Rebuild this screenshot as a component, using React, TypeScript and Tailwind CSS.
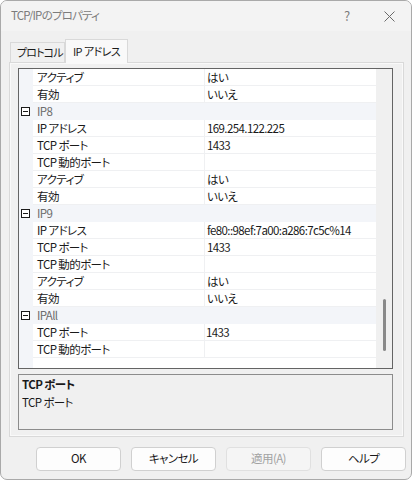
import React from 'react';

type Row = { cat?: string; n?: string; v?: string; edit?: boolean };

const rows: Row[] = [
  { n: 'アクティブ', v: 'はい' },
  { n: '有効', v: 'いいえ' },
  { cat: 'IP8' },
  { n: 'IP アドレス', v: '169.254.122.225' },
  { n: 'TCP ポート', v: '1433' },
  { n: 'TCP 動的ポート', v: '' },
  { n: 'アクティブ', v: 'はい' },
  { n: '有効', v: 'いいえ' },
  { cat: 'IP9' },
  { n: 'IP アドレス', v: 'fe80::98ef:7a00:a286:7c5c%14' },
  { n: 'TCP ポート', v: '1433' },
  { n: 'TCP 動的ポート', v: '' },
  { n: 'アクティブ', v: 'はい' },
  { n: '有効', v: 'いいえ' },
  { cat: 'IPAll' },
  { n: 'TCP ポート', v: '1433', edit: true },
  { n: 'TCP 動的ポート', v: '' },
];

const MinusBox = () => (
  <div className="w-[9px] h-[9px] border border-[#1a1a1a] flex items-center justify-center bg-white">
    <div className="w-[5px] h-px bg-[#1a1a1a]" />
  </div>
);

const GridRow = ({ row }: { row: Row }) => {
  if (row.cat) {
    return (
      <div className="flex h-[17px] bg-[#f3f5f9]">
        <div className="w-[14px] flex items-center pl-[2px]">
          <MinusBox />
        </div>
        <div className="flex-1 pl-[4px] leading-[17px] text-[#6d6d6d]">{row.cat}</div>
      </div>
    );
  }
  return (
    <div className="flex h-[17px]">
      <div className="w-[14px] bg-[#f3f5f9]" />
      <div className="w-[172px] border-b border-r border-[#eff0f2] bg-white pl-[4px] leading-[16px] whitespace-nowrap">
        {row.n}
      </div>
      <div
        className={
          row.edit
            ? 'w-[171px] bg-white pl-[1px] leading-[16px] whitespace-nowrap border-b border-[#eff0f2]'
            : 'w-[171px] bg-white pl-[2px] leading-[16px] whitespace-nowrap border-b border-[#eff0f2]'
        }
      >
        {row.v}
      </div>
    </div>
  );
};

export default function App() {
  return (
    <div className="w-[414px] h-[481px] bg-white font-['Noto_Sans_CJK_JP',sans-serif] [font-feature-settings:'palt'] text-[11.5px] tracking-[-0.6px] text-[#1a1a1a]">
      <div className="w-[412px] h-[480px] border border-[#a9a9a9] rounded-[7px] bg-[#f0f0f0] overflow-hidden flex flex-col">
        {/* Title bar */}
        <div className="h-[30px] bg-[#f3f3f3] flex items-center text-[#7c7c7c]">
          <div className="pl-[10px] flex-1 tracking-[-0.8px]">TCP/IPのプロパティ</div>
          <div className="w-[12px] text-[13px] mr-[28px]">?</div>
          <svg width="11" height="11" viewBox="0 0 11 11" className="mr-[16px]">
            <path d="M0.5 0.5 L10.5 10.5 M10.5 0.5 L0.5 10.5" stroke="#6a6a6a" strokeWidth="1" />
          </svg>
        </div>

        {/* Tabs */}
        <div className="flex items-end h-[23px] mt-[8px] pl-[9px] text-[11px] tracking-[-0.9px]">
          <div className="h-[20px] w-[55px] pl-[6px] border border-b-0 border-[#d9d9d9] bg-[#f0f0f0] leading-[19px] whitespace-nowrap">
            プロトコル
          </div>
          <div className="h-[24px] w-[63px] -mb-px relative z-10 pl-[7px] border border-b-0 border-[#d9d9d9] bg-[#f9f9f9] leading-[22px] whitespace-nowrap tracking-[-0.6px]">
            IP アドレス
          </div>
        </div>

        {/* Tab panel */}
        <div className="ml-[8px] w-[395px] h-[375px] border border-[#d9d9d9] bg-[#f9f9f9] p-px">
          <div className="w-full h-full bg-[#f0f0f0] pt-[4px] pl-[7px] flex flex-col">
            {/* Property grid */}
            <div className="w-[375px] h-[301px] border border-[#646464] bg-white flex">
              <div className="w-[357px] flex flex-col">
                {rows.map((r, i) => (
                  <GridRow key={i} row={r} />
                ))}
                <div className="flex flex-1">
                  <div className="w-[14px] bg-[#f3f5f9]" />
                  <div className="flex-1 bg-white" />
                </div>
              </div>
              <div className="w-[16px] bg-[#f0f0f0] flex justify-center pt-[230px]">
                <div className="w-[3px] h-[52px] bg-[#8a8a8a] rounded-full" />
              </div>
            </div>

            {/* Description */}
            <div className="w-[375px] h-[56px] mt-[5px] border border-[#8c8c8c] bg-[#f0f0f0] pl-[3px] pt-px">
              <div className="font-bold leading-[17px]">TCP ポート</div>
              <div className="leading-[17px] mt-px">TCP ポート</div>
            </div>
          </div>
        </div>

        {/* Buttons */}
        <div className="flex justify-end gap-[10px] pr-[5px] mt-[10px]">
          {['OK', 'キャンセル', '適用(A)', 'ヘルプ'].map((b) => (
            <div
              key={b}
              className={
                b === '適用(A)'
                  ? 'w-[85px] h-[24px] rounded-[4px] border border-[#e0e0e0] bg-[#f5f5f5] text-[#a2a2a2] flex items-center justify-center'
                  : 'w-[85px] h-[24px] rounded-[4px] border border-[#d0d0d0] bg-[#fdfdfd] flex items-center justify-center'
              }
            >
              {b}
            </div>
          ))}
        </div>
      </div>
    </div>
  );
}
